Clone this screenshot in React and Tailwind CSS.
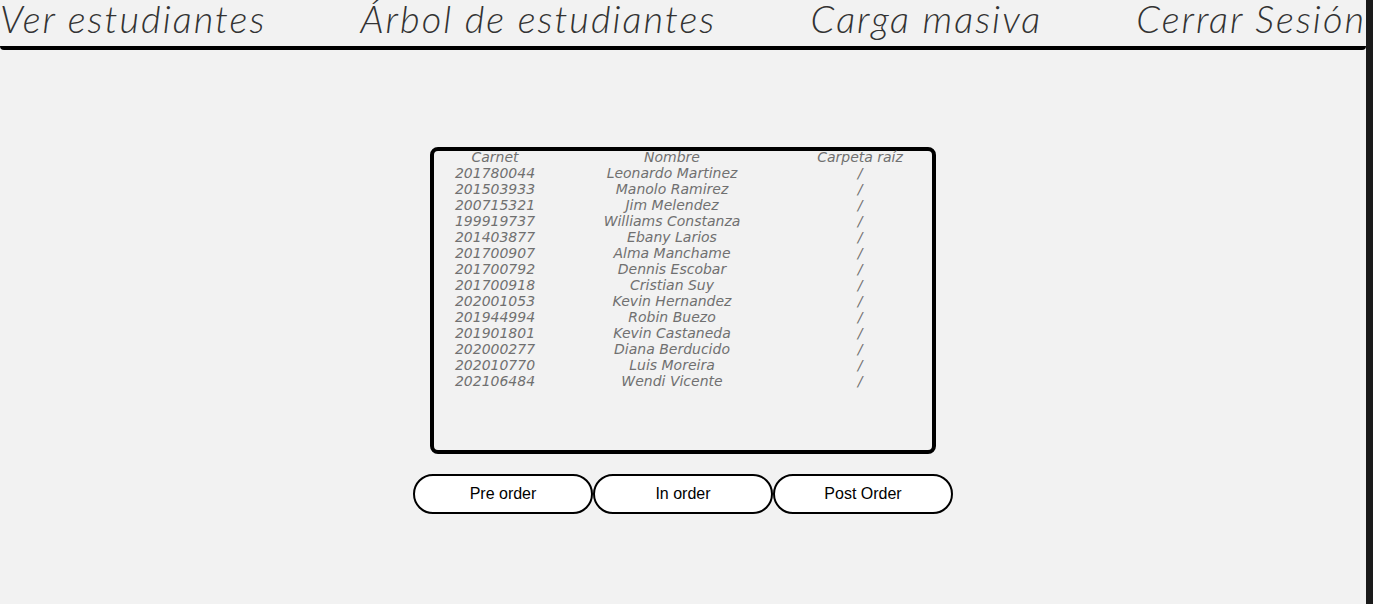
const students = [
  ["201780044", "Leonardo Martinez"],
  ["201503933", "Manolo Ramirez"],
  ["200715321", "Jim Melendez"],
  ["199919737", "Williams Constanza"],
  ["201403877", "Ebany Larios"],
  ["201700907", "Alma Manchame"],
  ["201700792", "Dennis Escobar"],
  ["201700918", "Cristian Suy"],
  ["202001053", "Kevin Hernandez"],
  ["201944994", "Robin Buezo"],
  ["201901801", "Kevin Castaneda"],
  ["202000277", "Diana Berducido"],
  ["202010770", "Luis Moreira"],
  ["202106484", "Wendi Vicente"],
];

const links = ["Ver estudiantes", "Árbol de estudiantes", "Carga masiva", "Cerrar Sesión"];

export default function App() {
  return (
    <div className="flex h-screen w-full overflow-hidden bg-[#f2f2f2]">
      <div className="flex-1 flex flex-col items-center">
        <nav className="w-full h-[50px] flex justify-between items-start border-b-4 border-black rounded-b-[4px] font-['Lato',sans-serif] italic font-light text-[38px] leading-[44px] tracking-[2px] text-[#333] whitespace-nowrap">
          {links.map((l, i) => (
            <a key={l} href="#" className={i < 3 ? "-mt-[4px] pr-[4px]" : "-mt-[4px]"}>{l}</a>
          ))}
        </nav>

        <div className="mt-[97px] w-[506px] h-[307px] border-4 border-black rounded-[8px] font-['DejaVu_Sans',sans-serif] italic text-[14px] leading-[16px] text-[#707070]">
          <div className="grid grid-cols-[122px_232px_144px] text-center -mt-[2px]">
            <span>Carnet</span>
            <span>Nombre</span>
            <span>Carpeta raíz</span>
            {students.map(([c, n]) => (
              <>
                <span key={c}>{c}</span>
                <span key={c + "n"}>{n}</span>
                <span key={c + "r"}>/</span>
              </>
            ))}
          </div>
        </div>

        <div className="mt-[20px] flex font-['Liberation_Sans',sans-serif] text-[16px] text-black">
          <button className="w-[180px] h-[40px] rounded-full border-2 border-black bg-white">Pre order</button>
          <button className="w-[180px] h-[40px] rounded-full border-2 border-black bg-white">In order</button>
          <button className="w-[180px] h-[40px] rounded-full border-2 border-black bg-white">Post Order</button>
        </div>
      </div>
      <div className="w-[7px] h-full bg-[#1a1a1a]"></div>
    </div>
  );
}
